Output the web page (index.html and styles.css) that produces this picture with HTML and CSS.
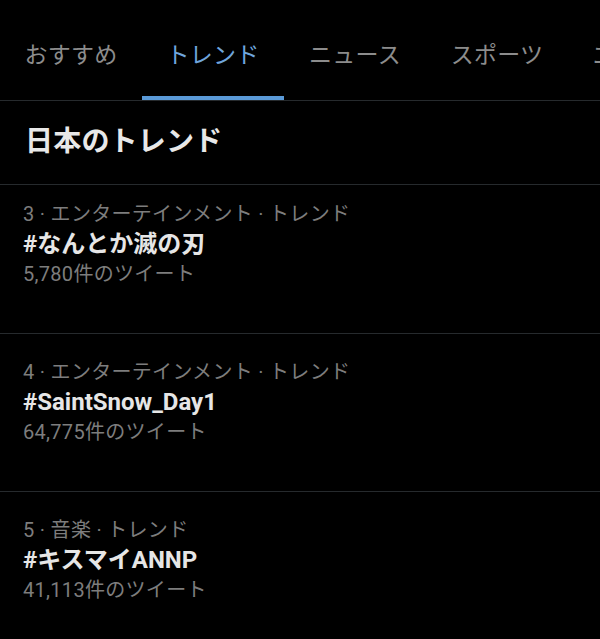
FILE: index.html
```html
<!DOCTYPE html>
<html lang="ja">
<head>
<meta charset="utf-8">
<link rel="stylesheet" href="styles.css">
</head>
<body>
<div class="screen">
  <nav class="tabs">
    <div class="tab">おすすめ</div>
    <div class="tab tab-active">トレンド</div>
    <div class="tab">ニュース</div>
    <div class="tab">スポーツ</div>
    <div class="tab">エンタメ</div>
  </nav>
  <h2 class="section-title">日本のトレンド</h2>
  <ul class="trends">
    <li class="trend trend-first">
      <div class="meta">3 · エンターテインメント · トレンド</div>
      <div class="name">#なんとか滅の刃</div>
      <div class="count">5,780件のツイート</div>
    </li>
    <li class="trend">
      <div class="meta">4 · エンターテインメント · トレンド</div>
      <div class="name">#SaintSnow_Day1</div>
      <div class="count">64,775件のツイート</div>
    </li>
    <li class="trend">
      <div class="meta">5 · 音楽 · トレンド</div>
      <div class="name">#キスマイANNP</div>
      <div class="count">41,113件のツイート</div>
    </li>
  </ul>
</div>
</body>
</html>
```

FILE: styles.css
```css
* { box-sizing: border-box; }
html, body {
  margin: 0;
  padding: 0;
  background: #000;
}
body {
  font-family: Roboto, "Noto Sans CJK JP", sans-serif;
  color: #e7e7e7;
  width: 600px;
  height: 639px;
  overflow: hidden;
}
.screen {
  display: flex;
  flex-direction: column;
}
.tabs {
  display: flex;
  height: 101px;
  border-bottom: 1px solid #262a2d;
  overflow: hidden;
}
.tab {
  flex: 0 0 142px;
  display: flex;
  justify-content: center;
  padding-top: 41px;
  font-size: 23px;
  line-height: 30px;
  color: #8c8c8c;
  letter-spacing: 0.3px;
  border-bottom: 4px solid transparent;
  white-space: nowrap;
}
.tab-active {
  color: #6fa5dc;
  border-bottom-color: #5a9ad8;
}
.section-title {
  margin: 0;
  height: 84px;
  padding: 23px 0 0 25px;
  font-size: 28px;
  line-height: 36px;
  font-weight: 700;
  color: #e8e8e8;
  border-bottom: 1px solid #262a2d;
  letter-spacing: 0.2px;
}
.trends {
  list-style: none;
  margin: 0;
  padding: 0;
}
.trend {
  padding: 23px 0 44px 23px;
  border-bottom: 1px solid #262a2d;
  display: flex;
  flex-direction: column;
}
.trend-first {
  padding-top: 14px;
}
.meta, .count {
  font-size: 20px;
  line-height: 30px;
  color: #7d7d7d;
  letter-spacing: 0.3px;
}
.name {
  font-size: 24px;
  line-height: 30px;
  font-weight: 700;
  color: #e6e6e6;
}
```
